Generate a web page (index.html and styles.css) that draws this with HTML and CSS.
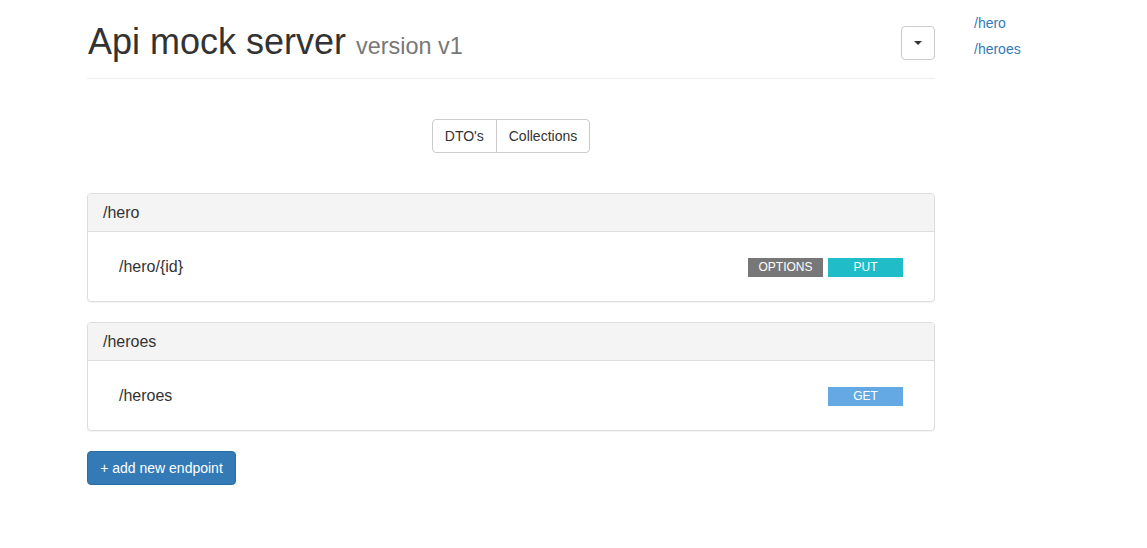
FILE: index.html
```html
<!DOCTYPE html>
<html lang="en">
<head>
<meta charset="utf-8">
<title>Api mock server</title>
<link rel="stylesheet" href="styles.css">
</head>
<body>
<div class="layout">
  <main class="main">
    <header class="page-header">
      <h1 class="title">Api mock server <small class="version">version v1</small></h1>
      <button class="dropdown-btn" type="button" aria-label="menu"><span class="caret"></span></button>
    </header>

    <div class="tabs-row">
      <div class="btn-group">
        <button class="btn" type="button">DTO's</button>
        <button class="btn" type="button">Collections</button>
      </div>
    </div>

    <section class="panel">
      <div class="panel-heading">/hero</div>
      <div class="panel-body">
        <div class="endpoint">
          <span class="endpoint-path">/hero/{id}</span>
          <div class="methods">
            <span class="method method-options">OPTIONS</span>
            <span class="method method-put">PUT</span>
          </div>
        </div>
      </div>
    </section>

    <section class="panel">
      <div class="panel-heading">/heroes</div>
      <div class="panel-body">
        <div class="endpoint">
          <span class="endpoint-path">/heroes</span>
          <div class="methods">
            <span class="method method-get">GET</span>
          </div>
        </div>
      </div>
    </section>

    <button class="btn-primary" type="button">+ add new endpoint</button>
  </main>

  <nav class="side-nav">
    <a href="#" class="side-link">/hero</a>
    <a href="#" class="side-link">/heroes</a>
  </nav>
</div>
</body>
</html>
```

FILE: styles.css
```css
* { box-sizing: border-box; }

html, body {
  margin: 0;
  padding: 0;
  background: #fff;
}

body {
  font-family: "Liberation Sans", Arial, Helvetica, sans-serif;
  font-size: 14px;
  line-height: 20px;
  color: #333;
}

.layout {
  display: flex;
  align-items: flex-start;
  padding-left: 87px;
  gap: 39px;
}

.main {
  width: 848px;
  flex: none;
}

.page-header {
  display: flex;
  justify-content: space-between;
  align-items: flex-start;
  padding-top: 22px;
  padding-bottom: 16px;
  border-bottom: 1px solid #eee;
}

.title {
  margin: 0;
  font-size: 36px;
  line-height: 40px;
  height: 40px;
  font-weight: 400;
  color: #333;
  padding-left: 1px;
}

.version {
  font-size: 23.4px;
  line-height: 0;
  color: #777;
  font-weight: 400;
}

.dropdown-btn {
  margin-top: 4px;
  width: 34px;
  height: 34px;
  border: 1px solid #ccc;
  border-radius: 4px;
  background: #fff;
  display: flex;
  align-items: center;
  justify-content: center;
  padding: 0;
}

.caret {
  width: 0;
  height: 0;
  border-left: 4px solid transparent;
  border-right: 4px solid transparent;
  border-top: 4px solid #333;
}

.tabs-row {
  display: flex;
  justify-content: center;
  margin-top: 40px;
  margin-bottom: 40px;
}

.btn-group {
  display: flex;
}

.btn {
  font-family: inherit;
  font-size: 14px;
  line-height: 20px;
  color: #333;
  background: #fff;
  border: 1px solid #ccc;
  padding: 6px 12px;
  height: 34px;
  margin: 0;
}

.btn:first-child {
  border-radius: 4px 0 0 4px;
}

.btn:last-child {
  border-radius: 0 4px 4px 0;
  margin-left: -1px;
}

.panel {
  border: 1px solid #ddd;
  border-radius: 4px;
  margin-bottom: 20px;
  box-shadow: 0 1px 1px rgba(0, 0, 0, 0.05);
  background: #fff;
}

.panel-heading {
  background: #f4f4f4;
  border-bottom: 1px solid #ddd;
  border-radius: 3px 3px 0 0;
  padding: 10px 15px;
  font-size: 16px;
  line-height: 17px;
  height: 38px;
}

.panel-body {
  padding: 15px;
}

.endpoint {
  display: flex;
  justify-content: space-between;
  align-items: center;
  padding: 10px 16px;
  height: 39px;
}

.endpoint-path {
  font-size: 16px;
  line-height: 20px;
}

.methods {
  display: flex;
  gap: 5px;
  padding-top: 2px;
}

.method {
  display: block;
  width: 75px;
  height: 19px;
  line-height: 19px;
  text-align: center;
  font-size: 12px;
  color: #fff;
  text-transform: uppercase;
}

.method-options { background: #777; }
.method-put { background: #20bcc7; }
.method-get { background: #64a9e3; }

.btn-primary {
  font-family: inherit;
  font-size: 14px;
  line-height: 20px;
  color: #fff;
  background: #337ab7;
  border: 1px solid #2e6da4;
  border-radius: 4px;
  padding: 6px 12px;
  height: 34px;
  width: 149px;
  margin-top: 0;
}

.side-nav {
  display: flex;
  flex-direction: column;
  padding-top: 10px;
}

.side-link {
  display: block;
  color: #337ab7;
  text-decoration: none;
  font-size: 14px;
  line-height: 20px;
  padding: 3px 0;
}
```
